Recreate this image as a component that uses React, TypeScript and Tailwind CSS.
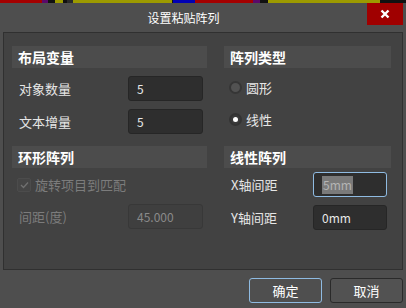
import React from 'react';

const strip: [string, number][] = [
  ['#a40000', 42], ['#5a0a6a', 6], ['#111111', 7], ['#9c9a00', 8], ['#111111', 4], ['#2a2a2a', 6],
  ['#9c9a00', 99], ['#111111', 1], ['#0000b4', 22], ['#a40000', 58], ['#5a0a6a', 7], ['#111111', 8],
  ['#9c9a00', 20], ['#9c9a00', 92], ['#111111', 26],
];

const Header = ({ children }: { children: React.ReactNode }) => (
  <div className="h-[22px] bg-[#4c4c4c] flex items-center pl-[6px] text-[14px] font-bold text-white">
    {children}
  </div>
);

const Field = ({ value, disabled }: { value: string; disabled?: boolean }) => (
  <div
    className={`w-[75px] h-[25px] rounded-[3px] border flex items-center pl-[8px] text-[12px] ${
      disabled ? 'bg-[#3f3f3f] border-[#383838] text-[#8a8a8a]' : 'bg-[#2e2e2e] border-[#262626] text-[#e8e8e8]'
    }`}
  >
    {value}
  </div>
);

const Radio = ({ checked, label }: { checked?: boolean; label: string }) => (
  <div className="flex items-center gap-[4px] pl-[5px]">
    <div
      className={`w-[13px] h-[13px] shrink-0 rounded-full border-2 flex items-center justify-center ${
        checked ? 'border-[#333333] bg-[#3a3a3a]' : 'border-[#363636] bg-[#525252]'
      }`}
    >
      {checked && <div className="w-[5px] h-[5px] rounded-full bg-white" />}
    </div>
    <span className="text-[13px] text-[#e6e6e6]">{label}</span>
  </div>
);

export default function App() {
  return (
    <div className="w-[406px] h-[308px] bg-[#4e4e4e] flex flex-col font-['Noto_Sans_CJK_SC','Noto_Sans',sans-serif] overflow-hidden">
      {/* strip of the window behind */}
      <div className="h-[3px] flex">
        {strip.map(([c, w], i) => (
          <div key={i} className="h-full" style={{ background: c, width: w }} />
        ))}
      </div>

      {/* title bar */}
      <div className="h-[29px] flex items-start">
        <div className="flex-1 text-center text-[12px] text-white pt-[6px]">设置粘贴阵列</div>
        <button className="w-[36px] h-[22px] mr-[3px] bg-[#a00000] flex items-center justify-center">
          <svg width="10" height="10" viewBox="0 0 10 10">
            <path d="M1.5 1.5 L8.5 8.5 M8.5 1.5 L1.5 8.5" stroke="white" strokeWidth="2.4" />
          </svg>
        </button>
      </div>

      {/* main panel */}
      <div className="mx-[3px] h-[238px] border border-[#303030] bg-[#424242] pl-[8px] pr-[11px] pt-[13px]">
        <div className="grid grid-cols-[195px_167px] gap-x-[17px] gap-y-[12px]">
          <div className="flex flex-col">
            <Header>布局变量</Header>
            <div className="mt-[8px] h-[25px] flex items-center justify-between pl-[7px] pr-[4px]">
              <span className="text-[13px] text-[#e6e6e6]">对象数量</span>
              <Field value="5" />
            </div>
            <div className="mt-[8px] h-[25px] flex items-center justify-between pl-[7px] pr-[4px]">
              <span className="text-[13px] text-[#e6e6e6]">文本增量</span>
              <Field value="5" />
            </div>
          </div>

          <div className="flex flex-col">
            <Header>阵列类型</Header>
            <div className="mt-[7px] h-[25px] flex items-center">
              <Radio label="圆形" />
            </div>
            <div className="mt-[7px] h-[25px] flex items-center">
              <Radio checked label="线性" />
            </div>
          </div>

          <div className="flex flex-col">
            <Header>环形阵列</Header>
            <div className="mt-[4px] h-[25px] flex items-center gap-[4px] pl-[5px]">
              <div className="w-[14px] h-[14px] shrink-0 rounded-[2px] border border-[#4c4c4c] bg-[#454545] flex items-center justify-center">
                <svg width="9" height="8" viewBox="0 0 9 8">
                  <path d="M1 4 L3.5 6.5 L8 1.5" fill="none" stroke="#707070" strokeWidth="1.3" />
                </svg>
              </div>
              <span className="text-[13px] text-[#7c7c7c]">旋转项目到匹配</span>
            </div>
            <div className="mt-[7px] h-[25px] flex items-center justify-between pl-[7px] pr-[4px]">
              <span className="text-[13px] text-[#7c7c7c]">间距(度)</span>
              <Field value="45.000" disabled />
            </div>
          </div>

          <div className="flex flex-col">
            <Header>线性阵列</Header>
            <div className="mt-[4px] h-[25px] flex items-center justify-between pl-[7px] pr-[4px]">
              <span className="text-[13px] text-[#e6e6e6]">X轴间距</span>
              <div className="w-[74px] h-[25px] rounded-[3px] border border-[#8fbbe2] bg-[#2e2e2e] flex items-center pl-[8px] text-[12px]">
                <span className="bg-[#7a7a7a] text-[#b4b4b4] px-[1px] leading-[18px]">5mm</span>
              </div>
            </div>
            <div className="mt-[8px] h-[25px] flex items-center justify-between pl-[7px] pr-[4px]">
              <span className="text-[13px] text-[#e6e6e6]">Y轴间距</span>
              <div className="w-[74px] h-[25px] rounded-[3px] border border-[#262626] bg-[#2e2e2e] flex items-center pl-[8px] text-[12px] text-[#e8e8e8]">
                0mm
              </div>
            </div>
          </div>
        </div>
      </div>

      {/* buttons */}
      <div className="mt-[8px] flex justify-end gap-[8px] pr-[3px]">
        <button className="w-[73px] h-[25px] rounded-[3px] border border-[#8fbbe2] bg-[#4f4f4f] text-[13px] text-white">
          确定
        </button>
        <button className="w-[73px] h-[25px] rounded-[3px] border border-[#2a2a2a] bg-[#525252] text-[13px] text-white">
          取消
        </button>
      </div>
    </div>
  );
}
